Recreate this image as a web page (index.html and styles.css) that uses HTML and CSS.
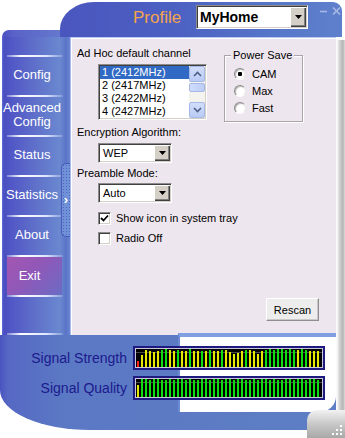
FILE: index.html
```html
<!DOCTYPE html>
<html lang="en">
<head>
    <meta charset="UTF-8">
    <title>Wireless Utility</title>
    <link rel="stylesheet" href="styles.css">
</head>
<body>

<div class="window">

    <div class="top">
        <div class="top-left"><div class="nav-cap"></div></div>
        <div class="top-bar">
            <span class="profile-label">Profile</span>
            <div class="combo combo-profile">
                <span class="combo-text">MyHome</span>
                <span class="combo-btn"><svg width="7" height="4" viewBox="0 0 7 4"><path d="M0 0h7L3.5 4z" fill="#000"/></svg></span>
            </div>
            <div class="win-btns">
                <svg width="8" height="10" viewBox="0 0 8 10"><path d="M0 5.5h7" stroke="#a9b9e6" stroke-width="1.6"/></svg>
                <svg width="9" height="10" viewBox="0 0 9 10"><path d="M1 1.5l7 7M8 1.5l-7 7" stroke="#a9b9e6" stroke-width="1.6"/></svg>
            </div>
        </div>
    </div>

    <div class="body">
        <div class="main">
            <div class="mid">
                <ul class="nav">
                    <li>Config</li>
                    <li>Advanced<br>Config</li>
                    <li>Status</li>
                    <li>Statistics</li>
                    <li>About</li>
                    <li class="nav-exit"><span class="exit-box">Exit</span></li>
                    <li class="nav-last"></li>
                </ul>
                <div class="handle"><span>&rsaquo;</span></div>

                <div class="panel">
                    <div class="panel-row">
                        <div class="channel">
                            <div class="label">Ad Hoc default channel</div>
                            <div class="listbox">
                                <ul class="list-items">
                                    <li class="selected">1 (2412MHz)</li>
                                    <li>2 (2417MHz)</li>
                                    <li>3 (2422MHz)</li>
                                    <li>4 (2427MHz)</li>
                                </ul>
                                <div class="scrollbar">
                                    <span class="sb-btn"><svg width="9" height="6" viewBox="0 0 9 6"><path d="M1 5l3.5-3.5L8 5" fill="none" stroke="#4d6185" stroke-width="1.6"/></svg></span>
                                    <span class="sb-thumb"></span>
                                    <span class="sb-track"></span>
                                    <span class="sb-btn"><svg width="9" height="6" viewBox="0 0 9 6"><path d="M1 1l3.5 3.5L8 1" fill="none" stroke="#4d6185" stroke-width="1.6"/></svg></span>
                                </div>
                            </div>
                        </div>

                        <div class="group">
                            <span class="group-title">Power Save</span>
                            <div class="radio-row radio-first"><span class="radio checked"></span>CAM</div>
                            <div class="radio-row"><span class="radio"></span>Max</div>
                            <div class="radio-row"><span class="radio"></span>Fast</div>
                        </div>
                    </div>

                    <div class="label label-enc">Encryption Algorithm:</div>
                    <div class="combo combo-small">
                        <span class="combo-text">WEP</span>
                        <span class="combo-btn"><svg width="7" height="4" viewBox="0 0 7 4"><path d="M0 0h7L3.5 4z" fill="#000"/></svg></span>
                    </div>

                    <div class="label label-pre">Preamble Mode:</div>
                    <div class="combo combo-small">
                        <span class="combo-text">Auto</span>
                        <span class="combo-btn"><svg width="7" height="4" viewBox="0 0 7 4"><path d="M0 0h7L3.5 4z" fill="#000"/></svg></span>
                    </div>

                    <div class="check-row check-first">
                        <span class="checkbox"><svg width="9" height="9" viewBox="0 0 9 9"><path d="M1 4l2.5 2.5L8 1.5" fill="none" stroke="#000" stroke-width="1.8"/></svg></span>
                        Show icon in system tray
                    </div>
                    <div class="check-row">
                        <span class="checkbox"></span>
                        Radio Off
                    </div>

                    <div class="panel-bottom">
                        <button class="btn">Rescan</button>
                    </div>
                </div>
            </div>

            <div class="lower">
                <div class="inset"></div>
                <div class="signals">
                    <div class="sig-row">
                        <span class="sig-label">Signal Strength</span>
                        <div class="meter"><div class="meter-bars" id="strength"></div></div>
                    </div>
                    <div class="sig-row">
                        <span class="sig-label">Signal Quality</span>
                        <div class="meter"><div class="meter-bars" id="quality"></div></div>
                    </div>
                </div>
            </div>
        </div>
        <div class="strip"></div>
    </div>

    <div class="corner">
        <svg width="11" height="11" viewBox="0 0 11 11">
            <rect x="8" y="0" width="2" height="2" fill="#fff"/>
            <rect x="4" y="4" width="2" height="2" fill="#fff"/>
            <rect x="8" y="4" width="2" height="2" fill="#fff"/>
            <rect x="0" y="8" width="2" height="2" fill="#fff"/>
            <rect x="4" y="8" width="2" height="2" fill="#fff"/>
            <rect x="8" y="8" width="2" height="2" fill="#fff"/>
        </svg>
    </div>
</div>

<script src="script.js"></script>
</body>
</html>
```

FILE: styles.css
```css
* {
    margin: 0;
    padding: 0;
    box-sizing: border-box;
}

body {
    background: #fff;
    font-family: "Liberation Sans", Arial, sans-serif;
    font-size: 11px;
    color: #000;
}

.window {
    position: relative;
    width: 345px;
    height: 438px;
    display: flex;
    flex-direction: column;
    overflow: hidden;
}

/* Barra superior */
.top {
    display: flex;
    height: 37px;
    flex-shrink: 0;
}

.top-left {
    width: 60px;
    display: flex;
    flex-direction: column;
    justify-content: flex-end;
}

.nav-cap {
    height: 7px;
    margin-left: 2px;
    border-top-left-radius: 8px;
    background: linear-gradient(to right, #4a50c2, #5a62c8 20%, #6478cc);
}

.top-bar {
    width: 282px;
    margin-top: 2px;
    display: flex;
    align-items: flex-start;
    padding-left: 73px;
    background: linear-gradient(to right, #4a56be, #4c60c2 40%, #5676c8 75%, #5e80cc);
    border-top-left-radius: 34px 27px;
    border-top-right-radius: 9px;
}

.profile-label {
    width: 63px;
    margin-top: 6px;
    color: #f4a44c;
    font-size: 17px;
}

.win-btns {
    display: flex;
    gap: 4px;
    margin: 4px 0 0 12px;
}

/* Combos estilo classico */
.combo {
    display: flex;
    background: #fff;
    border: 1px solid;
    border-color: #8c8c8c #fff #fff #8c8c8c;
    box-shadow: inset 1px 1px 0 #404040, inset -1px -1px 0 #d4d0c8;
    padding: 1px;
}

.combo-text {
    flex: 1;
    padding-left: 3px;
    display: flex;
    align-items: center;
}

.combo-btn {
    width: 16px;
    display: flex;
    align-items: center;
    justify-content: center;
    background: #d4d0c8;
    box-shadow: inset 1px 1px 0 #fff, inset -1px -1px 0 #404040, inset -2px -2px 0 #808080;
}

.combo-profile {
    width: 112px;
    height: 24px;
    margin-top: 3px;
}

.combo-profile .combo-text {
    font-size: 14px;
    font-weight: bold;
    padding-left: 2px;
}

.combo-small {
    width: 74px;
    height: 20px;
    margin-left: 27px;
}

/* Corpo */
.body {
    display: flex;
    flex: 1;
}

.main {
    width: 336px;
    display: flex;
    flex-direction: column;
}

.mid {
    position: relative;
    display: flex;
    height: 298px;
}

/* Menu lateral */
.nav {
    width: 68px;
    margin-left: 2px;
    padding-top: 18px;
    list-style: none;
    background: linear-gradient(to right, #5c6cd8 0, #4a4ec0 2px, #5258c6 10px, #6072ca 35px, #6a88d0 58px, #5a74c6 64px, #6a86d2);
}

.nav li {
    height: 40px;
    display: flex;
    align-items: center;
    justify-content: center;
    padding-right: 8px;
    color: #fff;
    font-size: 13px;
    line-height: 14px;
    text-align: center;
    background: linear-gradient(to right, rgba(255,255,255,0.3), #fff 25%, #dfe6ff 70%, rgba(220,230,255,0.2)) no-repeat 5px 0 / 56px 2px;
}

.nav .nav-exit {
    justify-content: flex-start;
    padding: 0 0 0 5px;
}

.exit-box {
    width: 55px;
    height: 38px;
    margin-top: 1px;
    display: flex;
    align-items: center;
    justify-content: center;
    padding-right: 10px;
    background: linear-gradient(135deg, #a456b2, #9058b8 45%, #6a6cc4);
}

.nav .nav-last {
    background:
        linear-gradient(to right, rgba(255,255,255,0.3), #fff 25%, #dfe6ff 70%, rgba(220,230,255,0.2)) no-repeat 5px 0 / 56px 2px,
        linear-gradient(to right, rgba(255,255,255,0.3), #fff 25%, #dfe6ff 70%, rgba(220,230,255,0.2)) no-repeat 5px 38px / 56px 2px;
}

.handle {
    position: absolute;
    left: 61px;
    top: 126px;
    width: 9px;
    height: 74px;
    border: 1px solid #4a5cb8;
    border-right: none;
    border-radius: 5px 0 0 5px;
    background: #7090d8 radial-gradient(circle, #4e66bc 0.7px, transparent 1px) 0 0 / 3px 3px;
    display: flex;
    align-items: center;
    justify-content: center;
}

.handle span {
    color: #fff;
    font-size: 13px;
    font-weight: bold;
    line-height: 10px;
    background: #7090d8;
}

/* Painel de configuracao */
.panel {
    flex: 1;
    display: flex;
    flex-direction: column;
    background: #eee6ee;
    border-left: 1px solid #a8bce8;
    border-top: 1px solid #b8c8f0;
    box-shadow: inset 1px 1px 0 #fff;
    padding-bottom: 14px;
}

.panel-row {
    display: flex;
    height: 85px;
}

.channel {
    width: 130px;
    margin-left: 6px;
}

.label {
    line-height: 13px;
    margin-left: 6px;
}

.channel .label {
    margin: 9px 0 0;
}

.listbox {
    display: flex;
    width: 109px;
    height: 56px;
    margin: 4px 0 0 21px;
    background: #fff;
    border: 1px solid;
    border-color: #8c8c8c #fff #fff #8c8c8c;
    box-shadow: inset 1px 1px 0 #404040, inset -1px -1px 0 #d4d0c8;
    padding: 1px;
}

.list-items {
    flex: 1;
    list-style: none;
}

.list-items li {
    height: 13px;
    line-height: 13px;
    padding-left: 2px;
}

.list-items .selected {
    background: #316ac5;
    color: #fff;
}

.scrollbar {
    width: 16px;
    display: flex;
    flex-direction: column;
    background: #f4f3ee;
}

.sb-btn {
    height: 16px;
    display: flex;
    align-items: center;
    justify-content: center;
    background: linear-gradient(#d2ddfa, #b9cbf5);
    border: 1px solid #a6b9e6;
    border-radius: 2px;
}

.sb-thumb {
    height: 9px;
    margin-top: 1px;
    background: linear-gradient(to right, #d0dcfc, #bccdf6);
    border: 1px solid #a6b9e6;
    border-radius: 2px;
}

.sb-track {
    flex: 1;
}

.group {
    width: 79px;
    height: 67px;
    margin: 17px 0 0 17px;
    border: 1px solid #aaa4aa;
    box-shadow: inset 1px 1px 0 #fff, 1px 1px 0 #fff;
}

.group-title {
    display: block;
    width: fit-content;
    margin: -7px 0 0 6px;
    padding: 0 2px;
    line-height: 13px;
    background: #eee6ee;
}

.radio-row {
    display: flex;
    align-items: center;
    height: 17px;
    padding-left: 9px;
}

.radio-first {
    margin-top: 3px;
}

.radio {
    width: 12px;
    height: 12px;
    margin-right: 6px;
    border-radius: 50%;
    border: 1px solid;
    border-color: #8a8a8a #e8e8e8 #fff #8a8a8a;
    background: radial-gradient(circle at 60% 60%, #fff 40%, #e4e2dc);
    box-shadow: inset 1px 1px 0 #c0c0c0;
}

.radio.checked {
    background: radial-gradient(circle, #000 2px, #fff 2.5px, #fff 40%, #e4e2dc);
}

.label-enc {
    margin-top: 3px;
}

.combo-small {
    margin-top: 4px;
}

.label-pre {
    margin-top: 4px;
}

.label-pre + .combo-small {
    margin-top: 3px;
}

.check-row {
    display: flex;
    align-items: center;
    height: 20px;
    margin-left: 27px;
}

.check-first {
    margin-top: 5px;
}

.checkbox {
    width: 13px;
    height: 13px;
    margin-right: 5px;
    display: flex;
    align-items: center;
    justify-content: center;
    background: #fff;
    border: 1px solid;
    border-color: #8c8c8c #fff #fff #8c8c8c;
    box-shadow: inset 1px 1px 0 #404040, inset -1px -1px 0 #d4d0c8;
}

.panel-bottom {
    margin-top: auto;
    display: flex;
    justify-content: flex-end;
    padding-right: 17px;
}

.btn {
    width: 53px;
    height: 23px;
    font-family: "Liberation Sans", Arial, sans-serif;
    font-size: 11px;
    color: #000;
    background: #ededed;
    border: 1px solid;
    border-color: #fff #8e8e8e #8e8e8e #fff;
    box-shadow: inset -1px -1px 0 #c8c8c8;
}

/* Area dos sinais */
.lower {
    position: relative;
    height: 95px;
    background: linear-gradient(to right, #4a54c0 0, #5668c4 8px, #5b78c4 60px, #5d7ec4);
    border-bottom-left-radius: 90px 40px;
}

.inset {
    position: absolute;
    left: 178px;
    top: -2px;
    width: 158px;
    height: 79px;
    background: #fff;
    border-top: 4px solid #7f9fe0;
    border-left: 2px solid #6a8ad2;
    border-bottom-right-radius: 16px;
}

.signals {
    position: relative;
    display: flex;
    flex-direction: column;
    gap: 6px;
    padding-top: 11px;
}

.sig-row {
    display: flex;
    align-items: center;
}

.sig-label {
    width: 127px;
    margin-right: 6px;
    text-align: right;
    font-size: 14px;
    color: #1c1a8e;
}

.meter {
    width: 192px;
    height: 24px;
    border: 2px solid #1e1a80;
    box-shadow: inset 0 0 0 1px #c8c8d8;
    padding: 1px;
}

.meter-bars {
    height: 100%;
    display: flex;
    align-items: flex-end;
    gap: 2px;
    padding-left: 1px;
    background: #000 linear-gradient(#4a4a4a, #4a4a4a) no-repeat 0 3px / 100% 1px;
}

.bar {
    width: 2px;
    flex-shrink: 0;
}

.bar-r { background: #ff2020; }
.bar-y { background: #e4e800; }
.bar-g { background: #10dc10; }

.strip {
    width: 9px;
    margin-top: 3px;
    background: linear-gradient(to right, #f4f4f4, #fff 1px, #d8d8d8 3px, #b4b4b4 7px, #dcdcdc);
}

.corner {
    position: absolute;
    right: 0;
    bottom: 0;
    width: 38px;
    height: 28px;
    border-top-left-radius: 10px;
    background: linear-gradient(#f2f2f2, #c8c8c8 50%, #a8a8a8);
    display: flex;
    align-items: flex-end;
    justify-content: flex-end;
    padding: 0 2px 2px 0;
}
```

FILE: script.js
```js
// alturas e cores das barras dos medidores
var strength = [
    [6,'r'],[12,'y'],[17,'y'],[16,'y'],[15,'y'],[16,'y'],[17,'g'],[18,'g'],[17,'y'],[16,'y'],
    [17,'g'],[16,'y'],[16,'y'],[18,'g'],[16,'y'],[16,'y'],[16,'g'],[16,'y'],[17,'g'],[16,'y'],
    [16,'y'],[17,'g'],[17,'y'],[15,'y'],[13,'y'],[14,'y'],[16,'y'],[17,'g'],[17,'y'],[16,'y'],
    [13,'y'],[16,'y'],[17,'g'],[18,'g'],[17,'g'],[18,'g'],[18,'g'],[17,'g'],[18,'g'],[17,'g'],
    [17,'y'],[18,'g'],[17,'g'],[16,'y'],[16,'y'],[16,'y']
];

var quality = [[12,'y']];
for (var i = 1; i < 46; i++) {
    quality.push([(i % 3 === 0 || i % 7 === 0) ? 17 : 18, 'g']);
}

function drawMeter(id, bars) {
    var el = document.getElementById(id);
    if (!el) return;
    for (var i = 0; i < bars.length; i++) {
        var s = document.createElement('span');
        s.className = 'bar bar-' + bars[i][1];
        s.style.height = bars[i][0] + 'px';
        el.appendChild(s);
    }
}

drawMeter('strength', strength);
drawMeter('quality', quality);
```
